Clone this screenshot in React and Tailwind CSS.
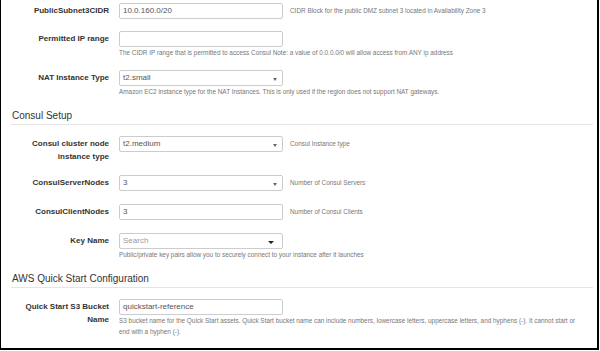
import React from "react";

const font = { fontFamily: '"Liberation Sans", Arial, sans-serif' };

const Caret = ({ dark }) =>
  dark ? (
    <span className="absolute right-[8px] top-[7px] w-0 h-0 border-l-[3px] border-r-[3px] border-t-[3px] border-l-transparent border-r-transparent border-t-[#222]" />
  ) : (
    <span className="absolute right-[5px] top-[7px] w-0 h-0 border-l-[2px] border-r-[2px] border-t-[3px] border-l-transparent border-r-transparent border-t-[#666]" />
  );

const Field = ({ value, select, placeholder, dark }) => (
  <div className="relative w-[164px] h-[16px] shrink-0 border border-[#ccc] rounded-[2px] bg-white pl-[3px] text-[8px] leading-[14px] text-[#555]">
    {value ? value : <span className="text-[#999]">{placeholder}</span>}
    {select && <Caret dark={dark} />}
  </div>
);

const Row = ({ label, value, select, placeholder, dark, side, below, mb = "mb-[12px]" }) => (
  <div className={"flex items-start " + mb}>
    <div className="w-[108px] shrink-0 pt-[1px] text-right text-[8px] leading-[13px] font-bold text-[#333]">
      {label}
    </div>
    <div className="ml-[10px] w-[458px]">
      <div className="flex items-start">
        <Field value={value} select={select} placeholder={placeholder} dark={dark} />
        {side && (
          <div className="ml-[7px] whitespace-nowrap text-[6.4px] leading-[16px] text-[#777]">{side}</div>
        )}
      </div>
      {below && <div className="text-[6.4px] leading-[11px] text-[#777]">{below}</div>}
    </div>
  </div>
);

const Heading = ({ children }) => (
  <div className="ml-[10px] mr-[4px] mb-[11px] border-b border-[#e5e5e5] pb-[1px] pl-[1px] text-[10px] leading-[14px] text-[#333]">
    {children}
  </div>
);

export default function App() {
  return (
    <div className="w-[600px] h-[351px] bg-white" style={font}>
      <div className="w-[599px] h-[350px] border-l border-r-2 border-b-2 border-black pt-[3px] overflow-hidden">
        <Row
          label="PublicSubnet3CIDR"
          value="10.0.160.0/20"
          side="CIDR Block for the public DMZ subnet 3 located in Availability Zone 3"
        />
        <Row
          label="Permitted IP range"
          below="The CIDR IP range that is permitted to access Consul Note: a value of 0.0.0.0/0 will allow access from ANY ip address"
        />
        <Row
          label="NAT Instance Type"
          value="t2.small"
          select
          below="Amazon EC2 instance type for the NAT Instances. This is only used if the region does not support NAT gateways."
        />
        <Heading>Consul Setup</Heading>
        <Row
          label={
            <>
              Consul cluster node
              <br />
              instance type
            </>
          }
          value="t2.medium"
          select
          side="Consul Instance type"
        />
        <Row
          label="ConsulServerNodes"
          value="3"
          select
          side="Number of Consul Servers"
          mb="mb-[13px]"
        />
        <Row
          label="ConsulClientNodes"
          value="3"
          side="Number of Consul Clients"
          mb="mb-[13px]"
        />
        <Row
          label="Key Name"
          placeholder="Search"
          select
          dark
          below="Public/private key pairs allow you to securely connect to your instance after it launches"
        />
        <Heading>AWS Quick Start Configuration</Heading>
        <Row
          label={
            <>
              Quick Start S3 Bucket
              <br />
              Name
            </>
          }
          value="quickstart-reference"
          below="S3 bucket name for the Quick Start assets. Quick Start bucket name can include numbers, lowercase letters, uppercase letters, and hyphens (-). It cannot start or end with a hyphen (-)."
        />
      </div>
    </div>
  );
}
